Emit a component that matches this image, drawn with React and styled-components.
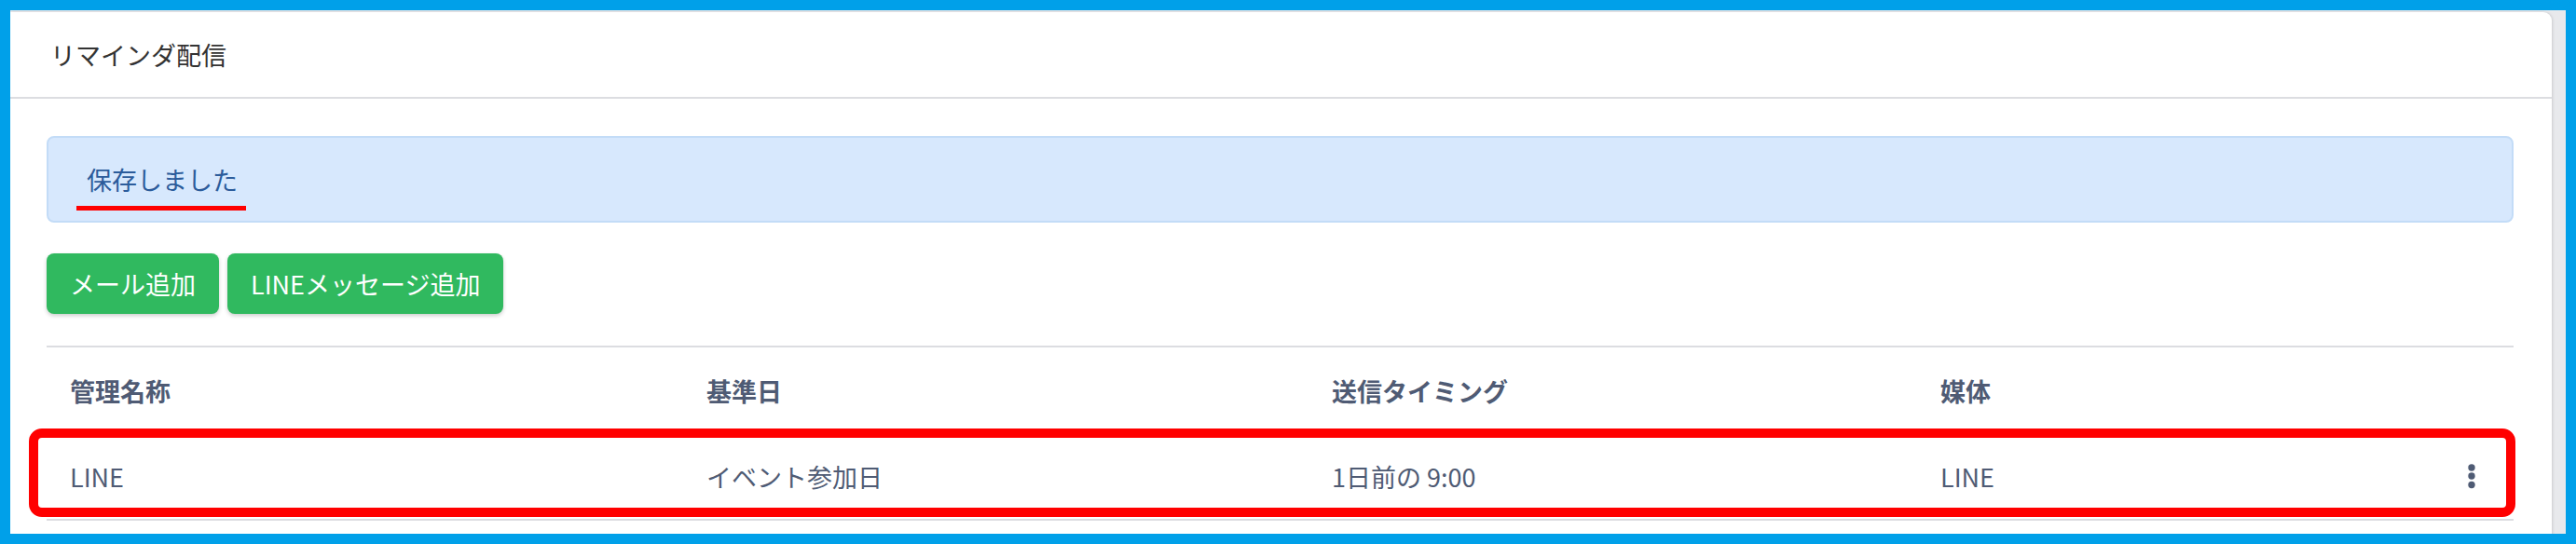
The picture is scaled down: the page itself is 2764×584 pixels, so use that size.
import React from "react";
import styled, { createGlobalStyle } from "styled-components";

const GlobalStyle = createGlobalStyle`
  html, body {
    margin: 0;
    padding: 0;
    background: #00a0e9;
  }
  body {
    font-family: "Noto Sans CJK JP", "Noto Sans", sans-serif;
  }
`;

const Frame = styled.div`
  width: 2764px;
  height: 584px;
  box-sizing: border-box;
  border: 11px solid #00a0e9;
  background: #e8e9ec;
  padding: 2px 15px 0 0;
  overflow: hidden;
`;

const Card = styled.div`
  background: #fff;
  border-radius: 0 9px 0 0;
  box-shadow: 1px 0 3px rgba(0, 0, 0, 0.12);
  height: 700px;
`;

const CardHeader = styled.div`
  height: 91px;
  border-bottom: 2px solid #dcdde1;
  padding-left: 43px;
  display: flex;
  align-items: center;
  font-size: 27px;
  color: #333;
`;

const CardBody = styled.div`
  padding: 40px 41px 0 39px;
`;

const Alert = styled.div`
  height: 93px;
  box-sizing: border-box;
  border: 2px solid #c3dcf7;
  background: #d7e8fd;
  border-radius: 8px;
  display: flex;
  align-items: center;
  padding-left: 41px;
  color: #2c5c9b;
  font-size: 27px;
`;

// red marker line drawn under the message
const AlertText = styled.span`
  position: relative;
  line-height: 1;

  &::after {
    content: "";
    position: absolute;
    left: -11px;
    right: -9px;
    bottom: -20px;
    height: 5px;
    background: #ff0000;
  }
`;

const ButtonRow = styled.div`
  display: flex;
  gap: 9px;
  margin-top: 33px;
`;

const Button = styled.button`
  height: 65px;
  padding: 0 25px;
  border: none;
  border-radius: 8px;
  background: #30b95f;
  color: #fff;
  font-family: inherit;
  font-size: 27px;
  box-shadow: 0 2px 4px rgba(0, 0, 0, 0.2);
`;

const Table = styled.div`
  margin-top: 34px;
  border-top: 2px solid #dcdde1;
`;

const Row = styled.div`
  display: grid;
  grid-template-columns: 683px 671px 653px 1fr 90px;
  align-items: center;
  height: 92px;
  color: #4f5b74;
  font-size: 27px;
  font-weight: ${(p) => (p.head ? 700 : 400)};
  border-bottom: ${(p) => (p.head ? "none" : "2px solid #dcdde1")};
  position: relative;

  ${(p) =>
    p.marked &&
    `
    &::before {
      content: "";
      position: absolute;
      left: -19px;
      right: -2px;
      top: -5px;
      bottom: 2px;
      border: 10px solid #ff0000;
      border-radius: 14px;
      pointer-events: none;
    }
  `}
`;

const Cell = styled.div`
  padding-left: 25px;
`;

const ActionCell = styled.div`
  display: flex;
  justify-content: center;
  align-items: center;
`;

const Kebab = () => (
  <svg width="10" height="28" viewBox="0 0 10 28">
    <circle cx="5" cy="5" r="3.7" fill="#4f5b74" />
    <circle cx="5" cy="14" r="3.7" fill="#4f5b74" />
    <circle cx="5" cy="23.5" r="3.7" fill="#4f5b74" />
  </svg>
);

const reminders = [
  { name: "LINE", base: "イベント参加日", timing: "1日前の 9:00", media: "LINE" }
];

function App() {
  return (
    <Frame>
      <GlobalStyle />
      <Card>
        <CardHeader>リマインダ配信</CardHeader>
        <CardBody>
          <Alert>
            <AlertText>保存しました</AlertText>
          </Alert>
          <ButtonRow>
            <Button>メール追加</Button>
            <Button>LINEメッセージ追加</Button>
          </ButtonRow>
          <Table>
            <Row head>
              <Cell>管理名称</Cell>
              <Cell>基準日</Cell>
              <Cell>送信タイミング</Cell>
              <Cell>媒体</Cell>
              <Cell />
            </Row>
            {reminders.map((r, i) => (
              <Row key={i} marked>
                <Cell>{r.name}</Cell>
                <Cell>{r.base}</Cell>
                <Cell>{r.timing}</Cell>
                <Cell>{r.media}</Cell>
                <ActionCell>
                  <Kebab />
                </ActionCell>
              </Row>
            ))}
          </Table>
        </CardBody>
      </Card>
    </Frame>
  );
}

export default App;
